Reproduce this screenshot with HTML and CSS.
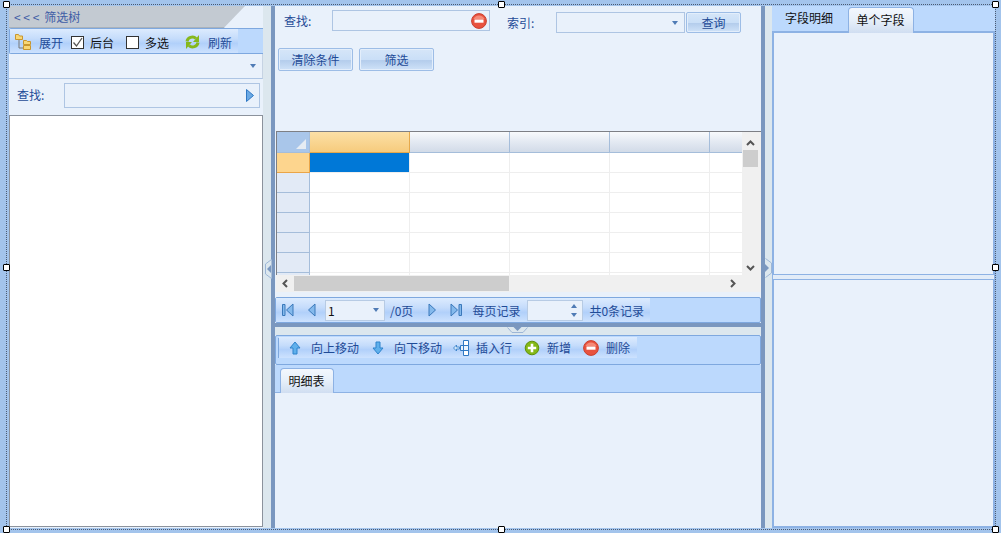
FILE: index.html
```html
<!DOCTYPE html>
<html lang="zh">
<head>
<meta charset="utf-8">
<title>筛选</title>
<link rel="stylesheet" href="styles.css">
</head>
<body>
<svg class="defs" width="0" height="0" aria-hidden="true">
  <defs>
    <symbol id="i-minus" viewBox="0 0 16 16">
      <circle cx="8" cy="8" r="7.400" fill="#e8523f" stroke="#c9402f"/>
      <path d="M2.500 6A6 6 0 0 1 13.500 6Z" fill="#f58a78"/>
      <rect x="3.500" y="6.500" width="9" height="3.200" fill="#fff"/>
    </symbol>
    <symbol id="i-plus" viewBox="0 0 16 16">
      <circle cx="8" cy="8" r="6.800" fill="#84b816" stroke="#5f8f0c"/>
      <path d="M6.700 3.800h2.600v2.900h2.900v2.600H9.300v2.900H6.700V9.300H3.800V6.700h2.900Z" fill="#fff"/>
    </symbol>
    <symbol id="i-first" viewBox="0 0 14 14">
      <path d="M1.500 1.500h2.500v11H1.500Z" fill="#84b9ec" stroke="#3a78ba"/>
      <path d="M12 1v12L5.500 7Z" fill="#84b9ec" stroke="#3a78ba"/>
    </symbol>
    <symbol id="i-prev" viewBox="0 0 14 14">
      <path d="M10 1v12L3.500 7Z" fill="#84b9ec" stroke="#3a78ba"/>
    </symbol>
    <symbol id="i-next" viewBox="0 0 14 14">
      <path d="M4 1v12l6.500-6Z" fill="#84b9ec" stroke="#3a78ba"/>
    </symbol>
    <symbol id="i-last" viewBox="0 0 14 14">
      <path d="M2 1v12l6.500-6Z" fill="#84b9ec" stroke="#3a78ba"/>
      <path d="M10 1.500h2.500v11H10Z" fill="#84b9ec" stroke="#3a78ba"/>
    </symbol>
  </defs>
</svg>

<div class="shell">
  <aside class="left">
    <div class="tree-title"><span class="tree-title-text">&lt; &lt; &lt;<span class="tree-title-name">筛选树</span></span></div>
    <div class="tool tree-tool">
      <div class="gloss gloss-tree">
        <svg class="ic-folders" width="18" height="18" viewBox="0 0 18 18">
          <path d="M5 6v9h5" fill="none" stroke="#777"/>
          <path d="M1.500 1.500h3l1 1.500h3v3.500h-7Z" fill="#f7d777" stroke="#c9962e"/>
          <path d="M9.500 7.500h3l1 1h3v3h-7Z" fill="#f7d777" stroke="#c9962e"/>
          <path d="M9.500 12.500h7v4h-7Z" fill="#f7d777" stroke="#c9962e"/>
        </svg>
        <span class="t-blue lbl-expand">展开</span>
        <span class="check"><svg width="11" height="11" viewBox="0 0 11 11"><path d="M1.500 5.500l3 3.500 5.500-8" fill="none" stroke="#555" stroke-width="1.300"/></svg></span>
        <span class="t-black lbl-bg">后台</span>
        <span class="check check-multi"></span>
        <span class="t-black lbl-multi">多选</span>
        <svg class="ic-refresh" width="17" height="16" viewBox="0 0 17 16">
          <path d="M3 7.500C3.500 3.500 9 1.500 12 4.500" fill="none" stroke="#86b81c" stroke-width="3"/>
          <path d="M15 1v7H9Z" fill="#86b81c"/>
          <path d="M14 8.500C13.500 12.500 8 14.500 5 11.500" fill="none" stroke="#86b81c" stroke-width="3"/>
          <path d="M2 15V8h6Z" fill="#86b81c"/>
        </svg>
        <span class="t-blue lbl-refresh">刷新</span>
      </div>
    </div>
    <div class="tree-combo"><span class="caret"></span></div>
    <div class="tree-find">
      <span class="t-blue">查找:</span>
      <div class="tree-input">
        <svg width="8" height="13" viewBox="0 0 8 13"><path d="M.5.500v12L7.500 6.500Z" fill="#6aa9e4" stroke="#2f78c4"/></svg>
      </div>
    </div>
    <div class="tree-body"></div>
  </aside>

  <div class="split split-left">
    <svg class="grip grip-left" width="7" height="20" viewBox="0 0 7 20">
      <path d="M6.500 .5L.5 5v10l6 4.500" fill="#dce7ee" stroke="#9db6d6"/>
      <path d="M6 6v8L2 10Z" fill="#7a97bf"/>
    </svg>
  </div>

  <main class="center">
    <section class="filter">
      <div class="filter-row">
        <span class="t-blue lbl-find">查找:</span>
        <div class="text-input">
          <svg class="ic16" width="16" height="16"><use href="#i-minus"/></svg>
        </div>
        <span class="t-blue lbl-index">索引:</span>
        <div class="combo"><span class="caret"></span></div>
        <button class="btn btn-query" type="button">查询</button>
      </div>
      <div class="filter-actions">
        <button class="btn btn-wide" type="button">清除条件</button>
        <button class="btn btn-wide" type="button">筛选</button>
      </div>
    </section>

    <section class="grid-wrap">
      <div class="grid-main">
        <div class="grid-table">
          <div class="row row-head">
            <div class="rh corner"><span class="corner-tri"></span></div>
            <div class="c hc hc-active"></div><div class="c hc"></div><div class="c hc"></div><div class="c hc"></div><div class="c hc c-last"></div>
          </div>
          <div class="row">
            <div class="rh rh-active"></div>
            <div class="c c-selected"></div><div class="c"></div><div class="c"></div><div class="c"></div><div class="c c-last"></div>
          </div>
          <div class="row"><div class="rh"></div><div class="c"></div><div class="c"></div><div class="c"></div><div class="c"></div><div class="c c-last"></div></div>
          <div class="row"><div class="rh"></div><div class="c"></div><div class="c"></div><div class="c"></div><div class="c"></div><div class="c c-last"></div></div>
          <div class="row"><div class="rh"></div><div class="c"></div><div class="c"></div><div class="c"></div><div class="c"></div><div class="c c-last"></div></div>
          <div class="row"><div class="rh"></div><div class="c"></div><div class="c"></div><div class="c"></div><div class="c"></div><div class="c c-last"></div></div>
          <div class="row"><div class="rh"></div><div class="c"></div><div class="c"></div><div class="c"></div><div class="c"></div><div class="c c-last"></div></div>
          <div class="row"><div class="rh"></div><div class="c"></div><div class="c"></div><div class="c"></div><div class="c"></div><div class="c c-last"></div></div>
        </div>
        <div class="vscroll">
          <svg width="9" height="6" viewBox="0 0 9 6"><path d="M1 5l3.500-3.500L8 5" fill="none" stroke="#555" stroke-width="2"/></svg>
          <span class="vthumb"></span>
          <span class="grow"></span>
          <svg width="9" height="6" viewBox="0 0 9 6"><path d="M1 1l3.500 3.500L8 1" fill="none" stroke="#555" stroke-width="2"/></svg>
        </div>
      </div>
      <div class="hscroll">
        <svg width="6" height="9" viewBox="0 0 6 9"><path d="M5 1L1.500 4.500 5 8" fill="none" stroke="#555" stroke-width="2"/></svg>
        <span class="hthumb"></span>
        <span class="grow"></span>
        <svg width="6" height="9" viewBox="0 0 6 9"><path d="M1 1l3.500 3.500L1 8" fill="none" stroke="#555" stroke-width="2"/></svg>
      </div>
    </section>

    <div class="tool pager">
      <div class="gloss gloss-pager">
        <svg class="nav nav-first" width="14" height="14"><use href="#i-first"/></svg>
        <svg class="nav nav-prev" width="14" height="14"><use href="#i-prev"/></svg>
        <div class="page-combo"><span class="num">1</span><span class="caret"></span></div>
        <span class="t-blue lbl-pages">/0页</span>
        <svg class="nav nav-next" width="14" height="14"><use href="#i-next"/></svg>
        <svg class="nav nav-last" width="14" height="14"><use href="#i-last"/></svg>
        <span class="t-blue lbl-per">每页记录</span>
        <div class="spin"><span class="spin-up"></span><span class="spin-down"></span></div>
        <span class="t-blue lbl-total">共0条记录</span>
      </div>
    </div>

    <div class="hsplit">
      <svg class="grip grip-bottom" width="21" height="6" viewBox="0 0 21 6">
        <path d="M.5 .5L5 5.500h11L20.500 .5" fill="#dce7ee" stroke="#9db6d6"/>
        <path d="M6.500 0h8l-4 4Z" fill="#7a97bf"/>
      </svg>
    </div>

    <div class="tool row-tool">
      <span class="tool-handle"></span>
      <div class="gloss gloss-row">
        <svg class="ic-arrow" width="12" height="14" viewBox="0 0 12 14"><path d="M6 1l5 6H8v6H4V7H1Z" fill="#5fb0ec" stroke="#2f83cc"/></svg>
        <span class="t-blue lbl-up">向上移动</span>
        <svg class="ic-arrow ic-down" width="12" height="14" viewBox="0 0 12 14"><path d="M6 13L1 7h3V1h4v6h3Z" fill="#5fb0ec" stroke="#2f83cc"/></svg>
        <span class="t-blue lbl-down">向下移动</span>
        <svg class="ic-insert" width="17" height="16" viewBox="0 0 17 16"><path d="M.5 8l3-3v2h3v2h-3v2Z" fill="#cfe6fb" stroke="#2f78c4" stroke-width=".8"/><path d="M10.500 .5h5v15h-5Z" fill="#fff" stroke="#2f78c4"/><path d="M7.500 5.500h8v5h-8Z M10.500 5.500v5" fill="#eaf3fd" stroke="#2f78c4"/></svg>
        <span class="t-blue lbl-insert">插入行</span>
        <svg class="ic-plus" width="16" height="16"><use href="#i-plus"/></svg>
        <span class="t-blue lbl-add">新增</span>
        <svg class="ic-del" width="16" height="16"><use href="#i-minus"/></svg>
        <span class="t-blue lbl-del">删除</span>
      </div>
    </div>

    <div class="tabs tabs-center">
      <span class="tab tab-active tab-detail">明细表</span>
    </div>
    <section class="detail-body"></section>
  </main>

  <div class="split split-right">
    <svg class="grip grip-right" width="7" height="20" viewBox="0 0 7 20">
      <path d="M.5 .5L6.500 5v10l-6 4.500" fill="#dce7ee" stroke="#9db6d6"/>
      <path d="M0 6v8l4-4Z" fill="#7a97bf"/>
    </svg>
  </div>

  <aside class="right">
    <div class="tabs tabs-right">
      <span class="tab tab-plain">字段明细</span>
      <span class="tab tab-active tab-single">单个字段</span>
    </div>
    <section class="panel panel-top"></section>
    <div class="panel-gap"></div>
    <section class="panel panel-bottom"></section>
  </aside>
</div>

<div class="selection">
  <span class="handle h-tl"></span><span class="handle h-tc"></span><span class="handle h-tr"></span>
  <span class="handle h-ml"></span><span class="handle h-mr"></span>
  <span class="handle h-bl"></span><span class="handle h-bc"></span><span class="handle h-br"></span>
</div>
</body>
</html>
```
FILE: styles.css
```css
* { box-sizing: border-box; }
html, body { margin: 0; padding: 0; }
body {
  position: relative;
  width: 1001px;
  height: 533px;
  overflow: hidden;
  background: #a3c4ec;
  font: 12px "Noto Sans CJK SC", "Liberation Sans", sans-serif;
  color: #1f4b97;
}
.defs { position: absolute; }
.t-blue { color: #1f4b97; white-space: nowrap; }
.t-black { color: #111; white-space: nowrap; }
.grow { flex: 1; }

.shell {
  display: flex;
  height: 522px;
  margin: 6px 6px 0 9px;
  width: 986px;
}

/* left column */
.left {
  width: 254px;
  display: flex;
  flex-direction: column;
  background: #e9f1fb;
}
.tree-title {
  height: 22px;
  background: #c3cad2;
  clip-path: polygon(0 0, 100% 0, 91% 100%, 0 100%);
  width: 236px;
  padding: 4px 0 0 5px;
  line-height: 14px;
  border-bottom: 1px solid #aab2bb;
}
.tree-title-text { color: #3f5da6; }
.tree-title-name { margin-left: 5px; }
.tool {
  background: #bcd9fd;
  border: 1px solid #7ea8df;
}
.gloss {
  display: flex;
  align-items: center;
  height: 100%;
  background: linear-gradient(#dcebfe 0, #c5dcfb 40%, #b1d0fa 60%, #cde2fe 100%);
}
.tree-tool { height: 26px; border-right: 0; border-radius: 2px 0 0 2px; }
.gloss-tree { width: 228px; padding-top: 2px; }
.ic-folders { margin-left: 4px; }
.lbl-expand { margin-left: 7px; }
.check {
  width: 13px;
  height: 13px;
  border: 1px solid #333;
  background: #fff;
  margin-left: 8px;
  display: flex;
  align-items: center;
  justify-content: center;
}
.lbl-bg { margin-left: 6px; }
.check-multi { margin-left: 12px; }
.lbl-multi { margin-left: 6px; }
.ic-refresh { margin-left: 15px; }
.lbl-refresh { margin-left: 7px; }
.tree-combo {
  height: 25px;
  border-bottom: 1px solid #adc5e4;
  border-right: 1px solid #c6d3e3;
  display: flex;
  align-items: center;
  justify-content: flex-end;
  padding-right: 6px;
}
.caret {
  width: 0;
  height: 0;
  border-left: 3.500px solid transparent;
  border-right: 3.500px solid transparent;
  border-top: 4px solid #4f7bb5;
}
.tree-find {
  height: 36px;
  display: flex;
  align-items: flex-start;
  padding: 4px 3px 0 8px;
}
.tree-find .t-blue { width: 47px; line-height: 24px; }
.tree-input {
  flex: 1;
  height: 25px;
  border: 1px solid #aec5e3;
  display: flex;
  align-items: center;
  justify-content: flex-end;
  padding-right: 5px;
}
.tree-body {
  flex: 1;
  background: #fff;
  border: 1px solid #8b929c;
  margin-bottom: 1px;
}

/* splitters */
.split {
  width: 12px;
  position: relative;
}
.split-left { background: linear-gradient(90deg, #dce7ee 0 8px, #7a97bf 8px 12px); }
.split-right { width: 11px; background: linear-gradient(90deg, #7a97bf 0 4px, #dce7ee 4px 11px); }
.grip { position: absolute; }
.grip-left { left: 2px; top: 253px; }
.grip-right { left: 4px; top: 252px; }

/* center */
.center {
  width: 486px;
  display: flex;
  flex-direction: column;
  background: #e9f1fb;
}
.filter {
  height: 125px;
  padding: 4px 0 0 3px;
}
.filter-row {
  display: flex;
  align-items: flex-start;
  height: 23px;
}
.lbl-find { width: 54px; padding-left: 6px; line-height: 21px; }
.text-input {
  width: 158px;
  height: 21px;
  border: 1px solid #aec5e3;
  display: flex;
  align-items: center;
  justify-content: flex-end;
  padding-right: 2px;
}
.lbl-index { margin: 2px 0 0 17px; width: 49px; line-height: 21px; }
.combo {
  width: 129px;
  height: 21px;
  margin-top: 2px;
  border: 1px solid #aec5e3;
  display: flex;
  align-items: center;
  justify-content: flex-end;
  padding-right: 6px;
}
.btn {
  font: inherit;
  color: #1f4b97;
  padding: 0;
  border: 1px solid #9dbde6;
  border-radius: 2px;
  background: linear-gradient(#d6e6f8 0, #cadff7 50%, #b4cdec 55%, #cfe2f8 100%);
  box-shadow: inset 0 0 0 1px #e3eefb;
}
.btn-query { width: 55px; height: 21px; margin: 2px 0 0 1px; }
.filter-actions {
  display: flex;
  gap: 6px;
  margin-top: 15px;
}
.btn-wide { width: 75px; height: 23px; }

.grid-wrap {
  height: 161px;
  margin-left: 1px;
  border-top: 1px solid #7d7f85;
  display: flex;
  flex-direction: column;
  width: 485px;
  background: #f0f0f0;
}
.grid-main { display: flex; height: 143px; }
.grid-table {
  width: 466px;
  height: 143px;
  overflow: hidden;
  background: #fff;
  border-left: 1px solid #7d7f85;
}
.row { display: flex; height: 20px; }
.row-head { height: 21px; }
.rh {
  width: 33px;
  flex: none;
  background: #e2eaf6;
  border-right: 1px solid #a5bdda;
  border-bottom: 1px solid #a5bdda;
}
.c {
  width: 100px;
  flex: none;
  border-right: 1px solid #eeeeee;
  border-bottom: 1px solid #eeeeee;
  background: #fff;
}
.c-last { width: 32px; border-right: 0; }
.hc {
  background: linear-gradient(#f8fafc 0, #e3e9f2 50%, #d2dbe8 100%);
  border-right: 1px solid #a5bdda;
  border-bottom: 1px solid #a5bdda;
}
.hc-active {
  background: linear-gradient(#fce0a6 0, #f6cb7d 100%);
  border-right: 1px solid #e6a94b;
  border-bottom: 1px solid #e6a94b;
}
.c-last.hc { border-right: 0; }
.corner {
  background: #a9c6ea;
  position: relative;
}
.corner-tri {
  position: absolute;
  right: 3px;
  bottom: 3px;
  width: 0;
  height: 0;
  border-left: 10px solid transparent;
  border-bottom: 10px solid #e6ecf3;
}
.rh-active {
  background: #fdd58e;
  border-right: 1px solid #eaa548;
  border-bottom: 1px solid #eaa548;
}
.c-selected { background: #0078d7; }
.vscroll {
  width: 19px;
  display: flex;
  flex-direction: column;
  align-items: center;
  background: #f0f0f0;
  padding: 8px 3px 4px 1px;
}
.vthumb { width: 15px; height: 17px; background: #cdcdcd; margin-top: 4px; flex: none; }
.hscroll {
  height: 17px;
  display: flex;
  align-items: center;
  background: #f0f0f0;
  padding: 0 25px 0 6px;
}
.hthumb { width: 215px; height: 15px; background: #cdcdcd; margin-left: 6px; }

.pager { height: 26px; margin-top: 5px; border-radius: 2px; }
.gloss-pager { width: 374px; }
.nav { flex: none; }
.nav-first { margin-left: 5px; }
.nav-prev { margin-left: 10px; }
.page-combo {
  width: 60px;
  height: 21px;
  margin-left: 6px;
  background: #e9f1fb;
  border: 1px solid #b7cbe4;
  display: flex;
  align-items: center;
  justify-content: space-between;
  padding: 0 5px 0 2px;
}
.num { color: #111; }
.lbl-pages { margin-left: 5px; }
.nav-next { margin-left: 12px; }
.nav-last { margin-left: 10px; }
.lbl-per { margin-left: 9px; }
.spin {
  position: relative;
  width: 56px;
  height: 21px;
  margin-left: 7px;
  background: #e9f1fb;
  border: 1px solid #b7cbe4;
}
.spin-up, .spin-down {
  position: absolute;
  right: 5px;
  width: 0;
  height: 0;
  border-left: 3.500px solid transparent;
  border-right: 3.500px solid transparent;
}
.spin-up { top: 3px; border-bottom: 4px solid #4f7bb5; }
.spin-down { bottom: 3px; border-top: 4px solid #4f7bb5; }
.lbl-total { margin-left: 6px; }

.hsplit {
  position: relative;
  height: 12px;
  background: linear-gradient(#7a97bf 0 4px, #dce7ee 4px 12px);
}
.grip-bottom { left: 232px; top: 4px; }
.row-tool {
  height: 30px;
  display: flex;
  padding: 1px 0 0;
  border-radius: 2px;
}
.tool-handle {
  width: 1px;
  height: 20px;
  margin: 1px 0 0 2px;
  background: #7ea8df;
  flex: none;
}
.gloss-row { width: 358px; height: 21px; }
.ic-arrow { margin-left: 10px; }
.lbl-up { margin-left: 10px; }
.ic-down { margin-left: 13px; }
.lbl-down { margin-left: 10px; }
.ic-insert { margin-left: 11px; }
.lbl-insert { margin-left: 6px; }
.ic-plus { margin-left: 12px; }
.lbl-add { margin-left: 7px; }
.ic-del { margin-left: 12px; }
.lbl-del { margin-left: 7px; }

.tabs {
  display: flex;
  align-items: flex-end;
  background: #bcd9fd;
  border-bottom: 1px solid #8db2e4;
}
.tabs-center { height: 28px; padding-left: 5px; }
.tab {
  display: flex;
  align-items: center;
  justify-content: center;
  color: #111;
  white-space: nowrap;
}
.tab-active {
  height: 25px;
  margin-bottom: -1px;
  padding-bottom: 2px;
  border: 1px solid #8db2e4;
  border-bottom: 0;
  border-radius: 4px 4px 0 0;
  background: linear-gradient(#f3f7fd 0, #e6eff9 50%, #d0def1 100%);
}
.tab-detail { width: 54px; padding-right: 1px; }
.detail-body { flex: 1; background: #e9f1fb; }

/* right */
.right {
  width: 223px;
  display: flex;
  flex-direction: column;
  background: #bcd9fd;
}
.tabs-right { height: 27px; border-bottom: 2px solid #8db2e4; }
.tab-plain { width: 74px; height: 25px; margin-right: 2px; padding-bottom: 2px; }
.tab-single { width: 66px; height: 26px; margin-bottom: -2px; padding-right: 1px; }
.panel {
  background: #e9f1fb;
  border-left: 2px solid #8db2e4;
  border-right: 2px solid #8db2e4;
}
.panel-top { height: 242px; border-bottom: 1px solid #8db2e4; }
.panel-gap { height: 5px; background: #e2ecf8; border: 1px solid #8db2e4; border-top: 0; }
.panel-bottom { flex: 1; border-bottom: 2px solid #8db2e4; }

/* designer selection overlay */
.selection {
  position: absolute;
  left: 6px;
  top: 4px;
  width: 990px;
  height: 526px;
  border: 1px dotted #4a5a72;
  pointer-events: none;
}
.handle {
  position: absolute;
  width: 7px;
  height: 7px;
  background: #fff;
  border: 1px solid #000;
  border-radius: 1px;
}
.h-tl { left: -4px; top: -4px; }
.h-tc { left: 491px; top: -4px; }
.h-tr { right: -4px; top: -4px; }
.h-ml { left: -4px; top: 259px; }
.h-mr { right: -4px; top: 259px; }
.h-bl { left: -4px; bottom: -4px; }
.h-bc { left: 491px; bottom: -4px; }
.h-br { right: -4px; bottom: -4px; }
```
